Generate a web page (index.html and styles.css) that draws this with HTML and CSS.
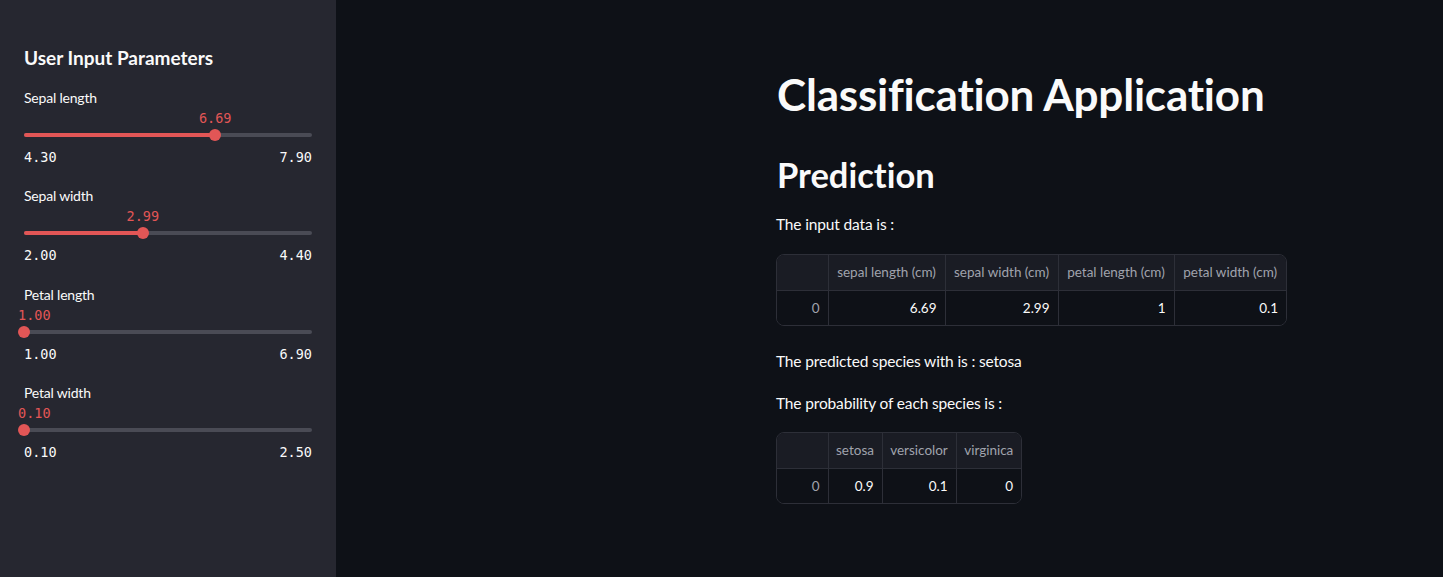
FILE: index.html
```html
<!DOCTYPE html>
<html lang="en">
<head>
<meta charset="utf-8">
<title>Classification Application</title>
<link rel="stylesheet" href="styles.css">
</head>
<body>
<div class="app">
  <aside class="sidebar">
    <h3 class="side-title">User Input Parameters</h3>

    <div class="slider">
      <div class="slider-label">Sepal length</div>
      <div class="slider-value"><span class="val" style="left:66.4%">6.69</span></div>
      <div class="track"><div class="fill" style="width:66.4%"></div><div class="thumb" style="left:66.4%"></div></div>
      <div class="ticks"><span>4.30</span><span>7.90</span></div>
    </div>

    <div class="slider">
      <div class="slider-label">Sepal width</div>
      <div class="slider-value"><span class="val" style="left:41.25%">2.99</span></div>
      <div class="track"><div class="fill" style="width:41.25%"></div><div class="thumb" style="left:41.25%"></div></div>
      <div class="ticks"><span>2.00</span><span>4.40</span></div>
    </div>

    <div class="slider">
      <div class="slider-label">Petal length</div>
      <div class="slider-value"><span class="val val-start">1.00</span></div>
      <div class="track"><div class="fill" style="width:0%"></div><div class="thumb" style="left:0%"></div></div>
      <div class="ticks"><span>1.00</span><span>6.90</span></div>
    </div>

    <div class="slider">
      <div class="slider-label">Petal width</div>
      <div class="slider-value"><span class="val val-start">0.10</span></div>
      <div class="track"><div class="fill" style="width:0%"></div><div class="thumb" style="left:0%"></div></div>
      <div class="ticks"><span>0.10</span><span>2.50</span></div>
    </div>
  </aside>

  <main class="main">
    <div class="content">
      <h1 class="title">Classification Application</h1>
      <h2 class="subtitle">Prediction</h2>
      <p class="text t1">The input data is :</p>
      <div class="frame">
        <table class="df">
          <thead>
            <tr><th class="idx"></th><th class="w-sl">sepal length (cm)</th><th class="w-sw">sepal width (cm)</th><th class="w-pl">petal length (cm)</th><th class="w-pw">petal width (cm)</th></tr>
          </thead>
          <tbody>
            <tr><td class="idx">0</td><td>6.69</td><td>2.99</td><td>1</td><td>0.1</td></tr>
          </tbody>
        </table>
      </div>
      <p class="text t2">The predicted species with is : setosa</p>
      <p class="text t3">The probability of each species is :</p>
      <div class="frame">
        <table class="df">
          <thead>
            <tr><th class="idx"></th><th class="w-se">setosa</th><th class="w-ve">versicolor</th><th class="w-vi">virginica</th></tr>
          </thead>
          <tbody>
            <tr><td class="idx">0</td><td>0.9</td><td>0.1</td><td>0</td></tr>
          </tbody>
        </table>
      </div>
    </div>
  </main>
</div>
</body>
</html>
```

FILE: styles.css
```css
* { box-sizing: border-box; }
html, body { margin: 0; padding: 0; }
body {
  font-family: "Lato", "Noto Sans", sans-serif;
  font-variant-ligatures: none;
  color: #fafafa;
  background: #0e1117;
}
.app {
  display: flex;
  width: 1443px;
  height: 577px;
  overflow: hidden;
}
.sidebar {
  width: 336px;
  flex: 0 0 336px;
  background: #262730;
  padding: 46px 24px 0 24px;
}
.side-title {
  margin: 0 0 18px 0;
  font-size: 19px;
  line-height: 24px;
  font-weight: 700;
  color: #fafafa;
}
.slider {
  margin-bottom: 20.34px;
}
.slider-label {
  font-size: 14px;
  line-height: 20px;
  height: 20px;
  color: #fafafa;
  letter-spacing: -0.2px;
}
.slider-value {
  position: relative;
  height: 18px;
  margin-top: 1px;
}
.val {
  position: absolute;
  top: 0;
  transform: translateX(-50%);
  font-family: "DejaVu Sans Mono", "Liberation Mono", monospace;
  font-size: 13.5px;
  line-height: 18px;
  color: #e25656;
  white-space: nowrap;
}
.val-start {
  left: -6px;
  transform: none;
}
.track {
  position: relative;
  height: 12px;
  margin-top: 2px;
}
.track::before {
  content: "";
  position: absolute;
  left: 0; right: 0;
  top: 4px;
  height: 4px;
  border-radius: 2px;
  background: #4a4b55;
}
.fill {
  position: absolute;
  left: 0;
  top: 4px;
  height: 4px;
  border-radius: 2px;
  background: #e25656;
}
.thumb {
  position: absolute;
  top: 0;
  width: 12px;
  height: 12px;
  margin-left: -6px;
  border-radius: 50%;
  background: #e25656;
}
.ticks {
  display: flex;
  justify-content: space-between;
  margin-top: 7px;
  height: 18px;
  font-family: "DejaVu Sans Mono", "Liberation Mono", monospace;
  font-size: 13.5px;
  line-height: 18px;
  color: #fafafa;
}

.main {
  flex: 1;
  background: #0e1117;
  padding: 68px 0 0 440px;
}
.title {
  margin: 0 0 0 1px;
  font-size: 44px;
  line-height: 52px;
  font-weight: 700;
  color: #fafafa;
  letter-spacing: -0.2px;
}
.subtitle {
  margin: 33px 0 0 1px;
  font-size: 34.5px;
  line-height: 44px;
  font-weight: 700;
  color: #fafafa;
}
.text {
  margin: 0;
  font-size: 15.5px;
  line-height: 24px;
  color: #fafafa;
  letter-spacing: -0.15px;
}
.t1 { margin-top: 15px; margin-bottom: 18px; }
.t2 { margin-top: 23px; }
.t3 { margin-top: 18px; margin-bottom: 17px; }

.frame {
  display: inline-block;
  border: 1px solid #2d2f38;
  border-radius: 8px;
  overflow: hidden;
  vertical-align: top;
}
.df {
  border-collapse: collapse;
  table-layout: fixed;
  font-size: 13.5px;
}
.df th, .df td {
  height: 35px;
  padding: 0 8px;
  border-left: 1px solid #2d2f38;
  white-space: nowrap;
  text-align: right;
  overflow: hidden;
}
.df th:first-child, .df td:first-child { border-left: none; }
.df th {
  background: #1a1c24;
  color: #a0a3ad;
  font-weight: 400;
  text-align: center;
  border-bottom: 1px solid #2d2f38;
  padding: 0 4px;
}
.df td {
  background: #0e1117;
  color: #fafafa;
}
.df td.idx { color: #a0a3ad; }
.df .idx { width: 51px; }
.w-sl { width: 117px; }
.w-sw { width: 113px; }
.w-pl { width: 116px; }
.w-pw { width: 112px; }
.w-se { width: 54px; }
.w-ve { width: 74px; }
.w-vi { width: 65px; }
```
